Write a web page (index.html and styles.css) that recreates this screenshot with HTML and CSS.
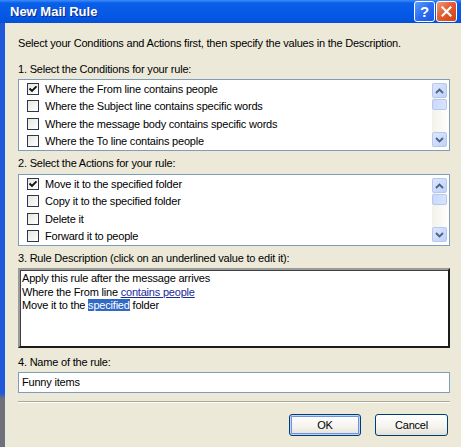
FILE: index.html
```html
<!DOCTYPE html>
<html>
<head>
<meta charset="utf-8">
<link rel="stylesheet" href="styles.css">
</head>
<body>
<div class="window">
  <div class="titlebar">
    <span class="title">New Mail Rule</span>
    <div class="tbtns">
      <span class="tbtn help">?</span>
      <span class="tbtn close"><svg width="11" height="11" viewBox="0 0 11 11"><path d="M1.5 1.5 L9.5 9.5 M9.5 1.5 L1.5 9.5" stroke="#fff" stroke-width="2.2" stroke-linecap="square"/></svg></span>
    </div>
  </div>
  <div class="frame">
    <div class="lborder"></div>
    <div class="content">
      <div class="txt intro">Select your Conditions and Actions first, then specify the values in the Description.</div>
      <div class="txt label l1">1. Select the Conditions for your rule:</div>
      <div class="listbox">
        <div class="items">
          <div class="row"><span class="cb on"><svg width="10" height="10" viewBox="0 0 10 10"><path d="M1.5 4.5 L4 7 L8.5 2.3" fill="none" stroke="#111" stroke-width="1.9"/></svg></span>Where the From line contains people</div>
          <div class="row"><span class="cb"></span>Where the Subject line contains specific words</div>
          <div class="row"><span class="cb"></span>Where the message body contains specific words</div>
          <div class="row"><span class="cb"></span>Where the To line contains people</div>
        </div>
        <div class="scroll">
          <span class="sbtn"><svg width="9" height="6" viewBox="0 0 9 6"><path d="M1 5 L4.5 1.5 L8 5" fill="none" stroke="#4d6185" stroke-width="1.8"/></svg></span>
          <span class="thumb"></span>
          <span class="track"></span>
          <span class="sbtn"><svg width="9" height="6" viewBox="0 0 9 6"><path d="M1 1 L4.5 4.5 L8 1" fill="none" stroke="#4d6185" stroke-width="1.8"/></svg></span>
        </div>
      </div>
      <div class="txt label l2">2. Select the Actions for your rule:</div>
      <div class="listbox">
        <div class="items">
          <div class="row"><span class="cb on"><svg width="10" height="10" viewBox="0 0 10 10"><path d="M1.5 4.5 L4 7 L8.5 2.3" fill="none" stroke="#111" stroke-width="1.9"/></svg></span>Move it to the specified folder</div>
          <div class="row"><span class="cb"></span>Copy it to the specified folder</div>
          <div class="row"><span class="cb"></span>Delete it</div>
          <div class="row"><span class="cb"></span>Forward it to people</div>
        </div>
        <div class="scroll">
          <span class="sbtn"><svg width="9" height="6" viewBox="0 0 9 6"><path d="M1 5 L4.5 1.5 L8 5" fill="none" stroke="#4d6185" stroke-width="1.8"/></svg></span>
          <span class="thumb"></span>
          <span class="track"></span>
          <span class="sbtn"><svg width="9" height="6" viewBox="0 0 9 6"><path d="M1 1 L4.5 4.5 L8 1" fill="none" stroke="#4d6185" stroke-width="1.8"/></svg></span>
        </div>
      </div>
      <div class="txt label l3">3. Rule Description (click on an underlined value to edit it):</div>
      <div class="desc">
        <div class="dline">Apply this rule after the message arrives</div>
        <div class="dline">Where the From line <span class="link">contains people</span></div>
        <div class="dline">Move it to the <span class="sel">specified</span> folder</div>
      </div>
      <div class="txt label l4">4. Name of the rule:</div>
      <div class="input">Funny items</div>
      <div class="sep"></div>
      <div class="buttons">
        <span class="btn default">OK</span>
        <span class="btn">Cancel</span>
      </div>
    </div>
  </div>
</div>
</body>
</html>
```

FILE: styles.css
```css
html, body {
  margin: 0;
  padding: 0;
  background: #ece9d8;
}
.window {
  width: 461px;
  height: 447px;
  display: flex;
  flex-direction: column;
  font-family: "Liberation Sans", Arial, sans-serif;
  font-size: 11px;
  color: #000;
  overflow: hidden;
}
.titlebar {
  height: 23px;
  flex: none;
  display: flex;
  align-items: center;
  justify-content: space-between;
  padding: 0 4px 0 10px;
  background: linear-gradient(#3d8ffb 0, #0a5fe9 3px, #0558e6 16px, #0450d8 23px);
}
.title {
  color: #fff;
  font-weight: bold;
  font-size: 13px;
  text-shadow: 1px 1px 0 #0c2a8a;
}
.tbtns {
  display: flex;
  gap: 1px;
  margin-top: -1px;
}
.tbtn {
  width: 19px;
  height: 19px;
  border: 1px solid #fff;
  border-radius: 3px;
  display: flex;
  align-items: center;
  justify-content: center;
  color: #fff;
  font-weight: bold;
  font-size: 15px;
}
.help {
  background: linear-gradient(135deg, #5c9bfd 0, #2a6ef2 50%, #1a58de 100%);
}
.close {
  background: linear-gradient(135deg, #f09a78 0, #e45c30 45%, #cf4418 100%);
}
.frame {
  flex: 1;
  display: flex;
}
.lborder {
  width: 5px;
  flex: none;
  background: linear-gradient(#2158d8 0, #2158d8 370px, #6f7078 376px, #6f7078 100%);
  border-right: 1px solid #e6e8f6;
}
.content {
  flex: 1;
  padding: 14px 11px 0 12px;
  display: flex;
  flex-direction: column;
  background: #ece9d8;
  letter-spacing: -0.2px;
}
.txt {
  line-height: 13px;
  height: 13px;
  white-space: nowrap;
}
.l1 { margin-top: 13px; margin-bottom: 3px; }
.l2 { margin-top: 6px; margin-bottom: 4px; }
.l3 { margin-top: 6px; margin-bottom: 3px; }
.l4 { margin-top: 8px; margin-bottom: 3px; }
.listbox {
  height: 70px;
  border: 1px solid #7f9db9;
  background: #fff;
  display: flex;
}
.items {
  flex: 1;
  overflow: hidden;
}
.row {
  height: 17.5px;
  display: flex;
  align-items: center;
  padding-left: 8px;
  white-space: nowrap;
}
.cb {
  width: 10px;
  height: 10px;
  border: 1px solid #2a3848;
  background: linear-gradient(135deg, #e6e6e0, #fff);
  margin-right: 6px;
  display: flex;
  align-items: center;
  justify-content: center;
  flex: none;
}
.scroll {
  width: 15px;
  margin: 3px 2px 3px 0;
  display: flex;
  flex-direction: column;
  background: linear-gradient(90deg, #f3f1ea, #fdfdfb);
}
.sbtn {
  height: 13px;
  border: 1px solid #b7c8ee;
  border-radius: 2px;
  background: linear-gradient(135deg, #dde8fe, #bfd1f9);
  display: flex;
  align-items: center;
  justify-content: center;
  flex: none;
}
.thumb {
  height: 9px;
  margin-top: 1px;
  border: 1px solid #b7c8ee;
  border-radius: 2px;
  background: linear-gradient(90deg, #cbdafc, #d8e3fd);
  flex: none;
}
.track { flex: 1; }
.desc {
  border-style: solid;
  border-width: 2px;
  border-color: #9a9a9a #1c1c1c #1c1c1c #9a9a9a;
  box-shadow: inset 1px 1px 0 #404040;
  background: #fff;
  padding: 2px 2px 0 2px;
  height: 74px;
}
.dline {
  line-height: 13.5px;
  height: 13.5px;
  white-space: nowrap;
}
.link {
  color: #1a2a96;
  text-decoration: underline;
}
.sel {
  background: #316ac5;
  color: #fff;
}
.input {
  height: 19px;
  line-height: 19px;
  border: 1px solid #7f9db9;
  background: #fff;
  padding-left: 3px;
}
.sep {
  margin-top: 8px;
  height: 1px;
  border-top: 1px solid #aca899;
  background: #fff;
}
.buttons {
  margin-top: 11px;
  display: flex;
  justify-content: flex-end;
  gap: 14px;
  padding-right: 2px;
}
.btn {
  width: 71px;
  height: 20px;
  border: 1px solid #003c74;
  border-radius: 3px;
  background: linear-gradient(#ffffff 0, #f4f3ee 60%, #e3e0d4 100%);
  display: flex;
  align-items: center;
  justify-content: center;
}
.btn.default {
  width: 70px;
  box-shadow: inset 0 0 0 1px #c2d4f7, inset 0 0 0 2px #6e92e0;
}
```
